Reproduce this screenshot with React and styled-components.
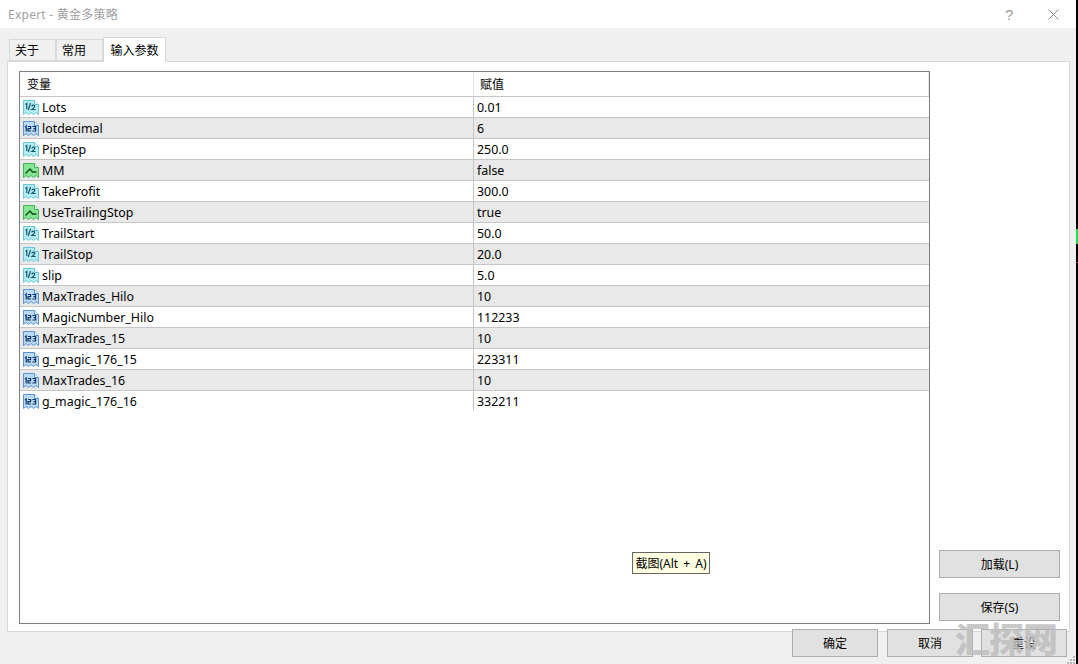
import React from "react";
import styled, { createGlobalStyle } from "styled-components";

const GlobalStyle = createGlobalStyle`
  html, body {
    margin: 0;
    padding: 0;
    background: #fff;
  }
  body {
    font-family: "Noto Sans", "Noto Sans CJK SC", sans-serif;
    font-size: 12.4px;
    color: #000;
  }
`;

const Page = styled.div`
  width: 1078px;
  height: 664px;
  display: flex;
  overflow: hidden;
  position: relative;
`;
const Dialog = styled.div`
  width: 1076px;
  height: 664px;
  display: flex;
  flex-direction: column;
  background: #f0f0f0;
`;
const Edge = styled.div`
  width: 2px;
  height: 664px;
  background: #000;
  display: flex;
  flex-direction: column;
`;
const EdgeMark = styled.div`
  width: 2px;
  height: ${(p) => p.$h}px;
  margin-top: ${(p) => p.$top}px;
  background: ${(p) => p.$color};
`;
const TitleBar = styled.div`
  height: 28px;
  flex: none;
  background: #fff;
  display: flex;
  align-items: center;
  padding: 0 17px 0 8px;
`;
const Title = styled.div`
  flex: 1;
  font-size: 12px;
  letter-spacing: 0.25px;
  color: #a0a0a0;
`;
const HelpMark = styled.span`
  width: 43px;
  font-size: 15px;
  color: #9a9a9a;
  font-family: "Liberation Sans", sans-serif;
`;
const Tabs = styled.div`
  height: 33px;
  flex: none;
  display: flex;
  align-items: flex-end;
  padding-left: 9px;
`;
const Tab = styled.div`
  height: ${(p) => (p.$active ? 25 : 22)}px;
  width: ${(p) => p.$w}px;
  box-sizing: border-box;
  display: flex;
  align-items: center;
  justify-content: ${(p) => (p.$active ? "center" : "flex-start")};
  padding-left: ${(p) => (p.$active ? 0 : 5)}px;
  margin-bottom: ${(p) => (p.$active ? -1 : 0)}px;
  border: 1px solid #d9d9d9;
  border-bottom: ${(p) => (p.$active ? "none" : "1px solid #d9d9d9")};
  background: ${(p) => (p.$active ? "#fff" : "#f0f0f0")};
  font-size: 12px;
  position: relative;
  z-index: ${(p) => (p.$active ? 2 : 0)};
`;
const Panel = styled.div`
  height: 571px;
  flex: none;
  margin-left: 7px;
  margin-right: 6px;
  box-sizing: border-box;
  background: #fff;
  border: 1px solid #d9d9d9;
  display: flex;
  padding: 9px 9px 7px 11px;
  gap: 9px;
`;
const Table = styled.div`
  width: 911px;
  box-sizing: border-box;
  border: 1px solid #7f7f87;
  background: #fff;
`;
const HeaderRow = styled.div`
  height: 24px;
  display: grid;
  grid-template-columns: 454px 1fr;
  align-items: center;
`;
const HeaderCell = styled.div`
  padding-left: ${(p) => p.$pad}px;
  height: 100%;
  display: flex;
  align-items: center;
  font-size: 12px;
  border-right: 1px solid #e5e5e5;
`;
const Row = styled.div`
  height: 21px;
  box-sizing: border-box;
  display: grid;
  grid-template-columns: 454px 1fr;
  align-items: center;
  border-top: 1px solid #c6c6c6;
  background: ${(p) => (p.$alt ? "#e9e9e9" : "#fff")};
  width: 909px;
`;
const NameCell = styled.div`
  height: 100%;
  display: flex;
  align-items: center;
  gap: 2px;
  padding-left: 2px;
  border-right: 1px solid #c6c6c6;
`;
const ValueCell = styled.div`
  padding-left: 3px;
`;
const Side = styled.div`
  flex: 1;
  display: flex;
  flex-direction: column;
  justify-content: flex-end;
  gap: 15px;
  padding-bottom: 3px;
`;
const Button = styled.div`
  height: 28px;
  width: ${(p) => p.$w}px;
  box-sizing: border-box;
  border: 1px solid #adadad;
  background: #e1e1e1;
  display: flex;
  align-items: center;
  justify-content: center;
  flex: none;
  font-size: 12px;
`;
const Footer = styled.div`
  display: flex;
  justify-content: flex-end;
  gap: 8px;
  margin-top: -3px;
  padding-right: 9px;
  position: relative;
`;
const FooterLead = styled(Button)`
  margin-right: 1px;
`;
const Tip = styled.div`
  position: absolute;
  left: 632px;
  top: 552px;
  width: 78px;
  height: 22px;
  box-sizing: border-box;
  border: 1px solid #666;
  background: #ffffe1;
  display: flex;
  align-items: center;
  justify-content: center;
  white-space: nowrap;
  font-size: 12px;
  word-spacing: 2px;
`;
const Watermark = styled.div`
  position: absolute;
  left: 955px;
  top: 616px;
  font-size: 35px;
  line-height: 47px;
  font-weight: 900;
  color: rgba(190, 190, 190, 0.85);
  white-space: nowrap;
  letter-spacing: -1px;
`;
const Grip = styled.svg`
  position: absolute;
  right: 2px;
  bottom: 0;
`;

const iconColors = {
  half: { fill: "#b4ecf4", stroke: "#6cc6d8", text: "#14566f" },
  num: { fill: "#bcd9f5", stroke: "#5b93cf", text: "#0c3566" },
  bool: { fill: "#86e592", stroke: "#45b356", text: "#0b5019" },
};

const ParamIcon = ({ type }) => {
  const c = iconColors[type];
  return (
    <svg width="18" height="17" viewBox="0 0 18 17">
      <path
        d="M1.5 1.5H12.5L16.5 5.5V15.5L14 13.5L11.5 15.5L9 13.5L6.5 15.5L4 13.5L1.5 15.5Z"
        fill={c.fill}
        stroke={c.stroke}
      />
      <path d="M12.5 1.5V5.5H16.5" fill="#e8fbff" stroke={c.stroke} />
      {type === "half" && (
        <g fill="none" stroke={c.text} strokeWidth="1.2">
          <path d="M3.5 5.5L4.8 4.5V10" />
          <path d="M6.2 11L8.6 4" />
          <path d="M9.6 7.4Q11 5.6 12.6 6.6Q13.2 7.7 11.6 8.9L9.8 10.5H13.6" />
        </g>
      )}
      {type === "num" && (
        <g fill="none" stroke={c.text} strokeWidth="1.2">
          <path d="M3 7L4.2 6V11.5" />
          <path d="M6 6.5H8.6V8.7H6V11H9" />
          <path d="M10.4 6.5H13.6V11H10.4M11.5 8.7H13.6" />
        </g>
      )}
      {type === "bool" && (
        <g fill="none" stroke={c.text} strokeWidth="1.4" strokeLinejoin="miter">
          <path d="M3.5 11.5L8 7L10.5 10H14.5" />
        </g>
      )}
    </svg>
  );
};

const CloseIcon = () => (
  <svg width="11" height="11" viewBox="0 0 11 11">
    <path d="M0.5 0.5L10.5 10.5M10.5 0.5L0.5 10.5" stroke="#8a8a8a" fill="none" />
  </svg>
);

const params = [
  ["Lots", "0.01", "half"],
  ["lotdecimal", "6", "num"],
  ["PipStep", "250.0", "half"],
  ["MM", "false", "bool"],
  ["TakeProfit", "300.0", "half"],
  ["UseTrailingStop", "true", "bool"],
  ["TrailStart", "50.0", "half"],
  ["TrailStop", "20.0", "half"],
  ["slip", "5.0", "half"],
  ["MaxTrades_Hilo", "10", "num"],
  ["MagicNumber_Hilo", "112233", "num"],
  ["MaxTrades_15", "10", "num"],
  ["g_magic_176_15", "223311", "num"],
  ["MaxTrades_16", "10", "num"],
  ["g_magic_176_16", "332211", "num"],
];

const App = () => {
  return (
    <Page>
      <GlobalStyle />
      <Dialog>
        <TitleBar>
          <Title>Expert - 黄金多策略</Title>
          <HelpMark>?</HelpMark>
          <CloseIcon />
        </TitleBar>
        <Tabs>
          <Tab $w={47}>关于</Tab>
          <Tab $w={47}>常用</Tab>
          <Tab $w={63} $active>输入参数</Tab>
        </Tabs>
        <Panel>
          <Table>
            <HeaderRow>
              <HeaderCell $pad={7}>变量</HeaderCell>
              <HeaderCell $pad={6}>赋值</HeaderCell>
            </HeaderRow>
            {params.map(([name, value, type], i) => (
              <Row key={name} $alt={i % 2 === 1}>
                <NameCell>
                  <ParamIcon type={type} />
                  {name}
                </NameCell>
                <ValueCell>{value}</ValueCell>
              </Row>
            ))}
          </Table>
          <Side>
            <Button $w={121}>加载(L)</Button>
            <Button $w={121}>保存(S)</Button>
          </Side>
        </Panel>
        <Footer>
          <FooterLead $w={86}>确定</FooterLead>
          <Button $w={86}>取消</Button>
          <Button $w={86}>重设</Button>
        </Footer>
      </Dialog>
      <Edge>
        <EdgeMark $top={229} $h={15} $color="#22dd44" />
        <EdgeMark $top={18} $h={1} $color="#e02020" />
      </Edge>
      <Tip>截图(Alt + A)</Tip>
      <Watermark>汇探网</Watermark>
      <Grip width="9" height="8" viewBox="0 0 9 8">
        <g fill="#b5b5b5">
          <rect x="6" y="0" width="2" height="2" />
          <rect x="3" y="3" width="2" height="2" />
          <rect x="6" y="3" width="2" height="2" />
          <rect x="0" y="6" width="2" height="2" />
          <rect x="3" y="6" width="2" height="2" />
          <rect x="6" y="6" width="2" height="2" />
        </g>
      </Grip>
    </Page>
  );
};

export default App;
